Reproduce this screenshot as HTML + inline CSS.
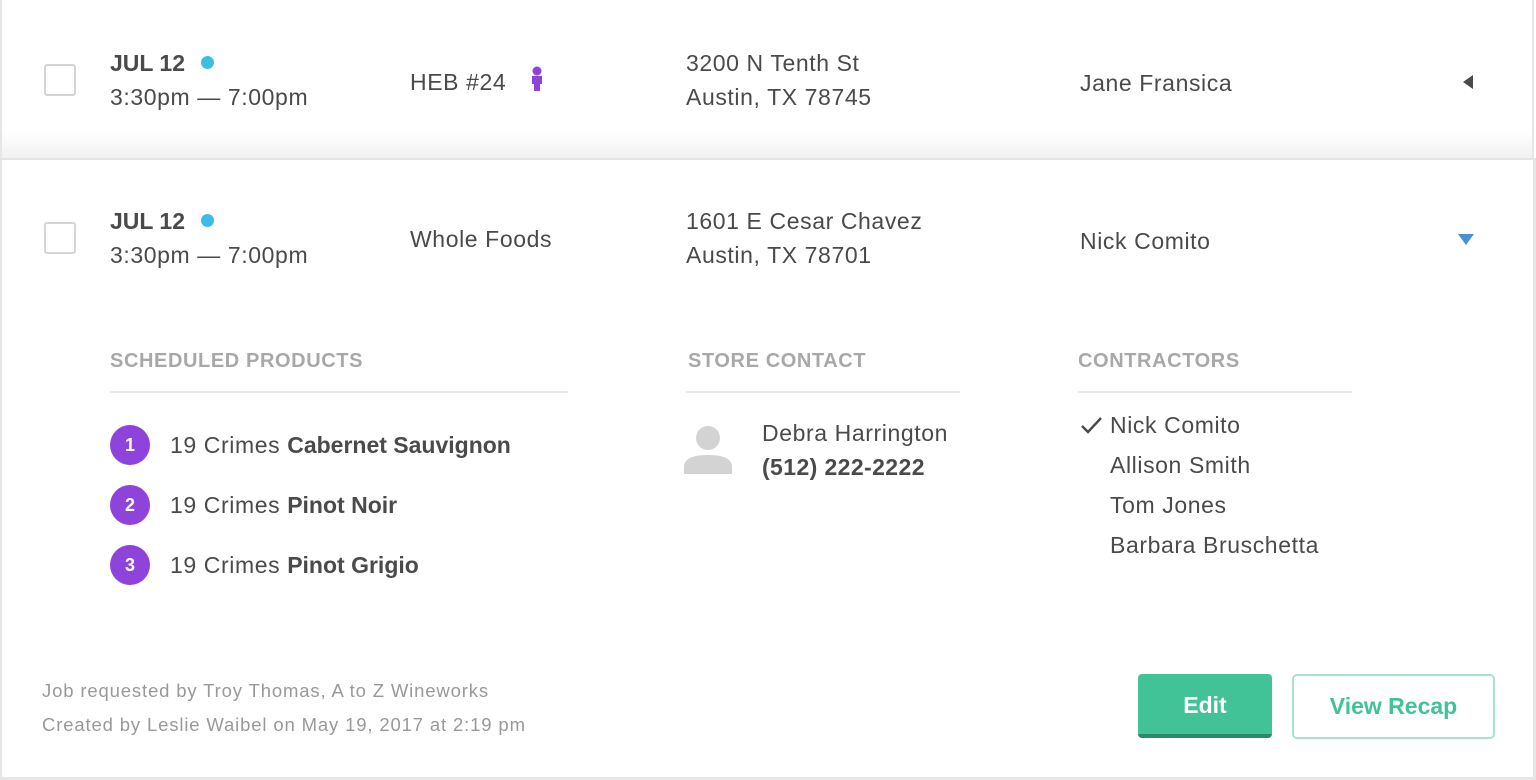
<!DOCTYPE html>
<html><head><meta charset="utf-8"><style>
*{margin:0;padding:0;box-sizing:border-box}
body{width:1536px;height:780px;background:#fff;font-family:"Liberation Sans",sans-serif;color:#4a4a4a;position:relative;overflow:hidden}
.a{position:absolute;white-space:nowrap}
.t{font-size:23px;line-height:34px;letter-spacing:0.6px}
.cb{position:absolute;width:32px;height:32px;border:2px solid #d5d5d5;border-radius:3px;background:#fff}
.dot{display:inline-block;width:13px;height:13px;border-radius:50%;background:#3dbde6;margin-left:16px;vertical-align:2px}
.h{font-size:20px;color:#a8a8a8;font-weight:bold;letter-spacing:0.6px}
.hl{position:absolute;height:2px;background:#e8e8e8}
.n{position:absolute;width:40px;height:40px;border-radius:50%;background:#8e44db;color:#fff;font-size:18px;font-weight:bold;text-align:center;line-height:40px}
.f{font-size:18.5px;color:#999;line-height:34px;letter-spacing:0.85px}
b{letter-spacing:0}
</style></head><body>
<div class="a" style="left:0;top:0;width:1534px;height:158px;background:linear-gradient(#fff 0,#fff 132px,#f1f1f1 158px);border-left:2px solid #e6e6e6;border-right:2px solid #e6e6e6"></div>
<div class="a" style="left:0;top:158px;width:1536px;height:2px;background:#e4e4e4"></div>
<div class="a" style="left:0;top:160px;width:2px;height:620px;background:#e6e6e6"></div>
<div class="a" style="left:1533px;top:160px;width:3px;height:620px;background:#e6e6e6"></div>
<div class="a" style="left:0;top:777px;width:1536px;height:3px;background:#e6e6e6"></div>

<div class="cb" style="left:44px;top:64px"></div>
<div class="a t" style="left:110px;top:46px;font-weight:bold;letter-spacing:0">JUL 12<span class="dot"></span></div>
<div class="a t" style="left:110px;top:80px">3:30pm — 7:00pm</div>
<div class="a t" style="left:410px;top:65px">HEB #24</div>
<svg class="a" style="left:530px;top:66px" width="14" height="26" viewBox="0 0 14 26"><circle cx="7" cy="5" r="4.5" fill="#8e44db"/><path d="M2 10h10v8h-2v7H4v-7H2z" fill="#8e44db"/></svg>
<div class="a t" style="left:686px;top:46px">3200 N Tenth St</div>
<div class="a t" style="left:686px;top:80px">Austin, TX 78745</div>
<div class="a t" style="left:1080px;top:66px">Jane Fransica</div>
<svg class="a" style="left:1461px;top:74px" width="14" height="16"><path d="M12 1L2 8l10 7z" fill="#4a4a4a"/></svg>

<div class="cb" style="left:44px;top:222px"></div>
<div class="a t" style="left:110px;top:204px;font-weight:bold;letter-spacing:0">JUL 12<span class="dot"></span></div>
<div class="a t" style="left:110px;top:238px">3:30pm — 7:00pm</div>
<div class="a t" style="left:410px;top:222px">Whole Foods</div>
<div class="a t" style="left:686px;top:204px">1601 E Cesar Chavez</div>
<div class="a t" style="left:686px;top:238px">Austin, TX 78701</div>
<div class="a t" style="left:1080px;top:224px">Nick Comito</div>
<svg class="a" style="left:1457px;top:233px" width="18" height="14"><path d="M1 1h16l-8 11z" fill="#4a90d0"/></svg>

<div class="a h" style="left:110px;top:350px">SCHEDULED PRODUCTS</div>
<div class="hl" style="left:110px;top:391px;width:458px"></div>
<div class="a h" style="left:688px;top:350px">STORE CONTACT</div>
<div class="hl" style="left:686px;top:391px;width:274px"></div>
<div class="a h" style="left:1078px;top:350px">CONTRACTORS</div>
<div class="hl" style="left:1078px;top:391px;width:274px"></div>

<div class="n" style="left:110px;top:425px">1</div>
<div class="a t" style="left:170px;top:428px">19 Crimes <b>Cabernet Sauvignon</b></div>
<div class="n" style="left:110px;top:485px">2</div>
<div class="a t" style="left:170px;top:488px">19 Crimes <b>Pinot Noir</b></div>
<div class="n" style="left:110px;top:545px">3</div>
<div class="a t" style="left:170px;top:548px">19 Crimes <b>Pinot Grigio</b></div>

<svg class="a" style="left:683px;top:425px" width="50" height="50"><circle cx="25" cy="13" r="12" fill="#d3d3d3"/><path d="M1 49v-7c0-8 8-12 24-12s24 4 24 12v7z" fill="#d3d3d3"/></svg>
<div class="a t" style="left:762px;top:416px">Debra Harrington</div>
<div class="a t" style="left:762px;top:450px;font-weight:bold;letter-spacing:0.4px">(512) 222-2222</div>

<svg class="a" style="left:1080px;top:416px" width="24" height="20"><path d="M2 10l6 6L21 2" stroke="#4a4a4a" stroke-width="2.4" fill="none"/></svg>
<div class="a t" style="left:1110px;top:408px">Nick Comito</div>
<div class="a t" style="left:1110px;top:448px">Allison Smith</div>
<div class="a t" style="left:1110px;top:488px">Tom Jones</div>
<div class="a t" style="left:1110px;top:528px">Barbara Bruschetta</div>

<div class="a f" style="left:42px;top:674px">Job requested by Troy Thomas, A to Z Wineworks</div>
<div class="a f" style="left:42px;top:708px">Created by Leslie Waibel on May 19, 2017 at 2:19 pm</div>

<div class="a" style="left:1138px;top:674px;width:134px;height:64px;background:#42c297;border-radius:4px;border-bottom:4px solid #2c8a68;color:#fff;font-size:23px;font-weight:bold;text-align:center;line-height:62px">Edit</div>
<div class="a" style="left:1292px;top:674px;width:203px;height:65px;border:2px solid #a8e2cd;border-radius:5px;color:#42c297;font-size:23px;font-weight:bold;text-align:center;line-height:61px">View Recap</div>
</body></html>
